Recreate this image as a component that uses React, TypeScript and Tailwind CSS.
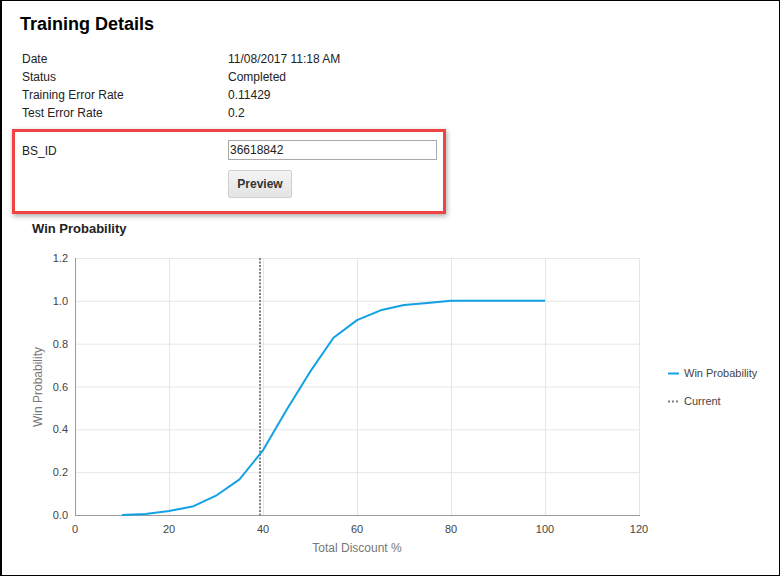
import React from 'react'

const details: [string, string][] = [
  ['Date', '11/08/2017 11:18 AM'],
  ['Status', 'Completed'],
  ['Training Error Rate', '0.11429'],
  ['Test Error Rate', '0.2'],
]

// win probability by total discount %
const curve: [number, number][] = [
  [10, 0], [15, 0.005], [20, 0.019], [25, 0.039], [30, 0.09], [35, 0.166],
  [40, 0.302], [45, 0.49], [50, 0.668], [55, 0.828], [60, 0.91], [65, 0.956],
  [70, 0.98], [75, 0.99], [80, 1], [85, 1], [90, 1], [95, 1], [100, 1],
]

const X0 = 75
const X1 = 639
const Y0 = 515
const Y1 = 258
const sx = (v: number) => X0 + ((X1 - X0) * v) / 120
const sy = (v: number) => Y0 - ((Y0 - Y1) * v) / 1.2

function WinChart() {
  const xTicks = [0, 20, 40, 60, 80, 100, 120]
  const yTicks = [0, 0.2, 0.4, 0.6, 0.8, 1.0, 1.2]
  const pts = curve.map(([x, y]) => `${sx(x).toFixed(1)},${sy(y).toFixed(1)}`).join(' ')
  return (
    <svg width={776} height={337} className="block" style={{ fontFamily: '"Liberation Sans", Arial, sans-serif' }}>
      <g transform="translate(-2,-238)">
        {yTicks.map((t) => (
          <line key={'h' + t} x1={X0} x2={X1} y1={sy(t) + 0.5} y2={sy(t) + 0.5} stroke="#e6e6e6" />
        ))}
        {xTicks.slice(1).map((t) => (
          <line key={'v' + t} x1={sx(t) + 0.5} x2={sx(t) + 0.5} y1={Y1} y2={Y0} stroke="#e6e6e6" />
        ))}
        <line x1={X0 + 0.5} x2={X0 + 0.5} y1={Y1} y2={Y0 + 1} stroke="#9a9a9a" />
        <line x1={X0} x2={X1 + 1} y1={Y0 + 0.5} y2={Y0 + 0.5} stroke="#9a9a9a" />
        {yTicks.map((t) => (
          <text key={'yl' + t} x={68} y={sy(t) + 4} textAnchor="end" fontSize={11} fill="#444">
            {t.toFixed(1)}
          </text>
        ))}
        {xTicks.map((t) => (
          <text key={'xl' + t} x={sx(t)} y={533} textAnchor="middle" fontSize={11} fill="#444">
            {t}
          </text>
        ))}
        <text x={357} y={552} textAnchor="middle" fontSize={12} fill="#777">
          Total Discount %
        </text>
        <text x={42} y={387} textAnchor="middle" fontSize={12} fill="#777" transform="rotate(-90 42 387)">
          Win Probability
        </text>
        <line x1={260} x2={260} y1={Y1} y2={Y0} stroke="#808080" strokeWidth={2} strokeDasharray="2 1.5" />
        <polyline points={pts} fill="none" stroke="#12a1e4" strokeWidth={2} strokeLinejoin="round" />
        <line x1={668} x2={679} y1={373.5} y2={373.5} stroke="#12a1e4" strokeWidth={2} />
        <text x={684} y={377} fontSize={11} fill="#444">
          Win Probability
        </text>
        <line x1={668} x2={679} y1={401.5} y2={401.5} stroke="#808080" strokeWidth={2} strokeDasharray="2 2" />
        <text x={684} y={405} fontSize={11} fill="#444">
          Current
        </text>
      </g>
    </svg>
  )
}

export default function App() {
  return (
    <div className="h-[576px] w-[780px] overflow-hidden border border-l-2 border-black bg-white font-['Liberation_Sans',Arial,sans-serif] text-[#222]">
      <h1 className="ml-[18px] mt-3 text-[18px] font-bold leading-[22px] text-black">Training Details</h1>

      <div className="mt-[15px] text-[12px] leading-[18px]">
        {details.map(([k, v]) => (
          <div key={k} className="flex">
            <span className="ml-5 w-[206px]">{k}</span>
            <span>{v}</span>
          </div>
        ))}
      </div>

      <div className="ml-[10px] mt-[7px] w-[434px] border-[3px] border-[#f04444] pb-[13px] pl-[7px] pt-2 shadow-[1px_2px_5px_rgba(0,0,0,0.35)]">
        <div className="flex items-center text-[12px]">
          <span className="w-[206px] pt-[2px]">BS_ID</span>
          <input
            readOnly
            value="36618842"
            className="h-5 w-[209px] border border-[#a9a9a9] px-px text-[12px] leading-[18px] text-[#222] outline-none"
          />
        </div>
        <button className="ml-[206px] mt-[10px] h-7 w-16 rounded-[2px] border border-[#cfcfcf] bg-gradient-to-b from-[#f4f4f4] to-[#e4e4e4] text-[12px] font-bold text-[#333]">
          Preview
        </button>
      </div>

      <div className="ml-[30px] mt-[6px] text-[13px] font-bold leading-[18px] text-[#222]">Win Probability</div>
      <WinChart />
    </div>
  )
}
